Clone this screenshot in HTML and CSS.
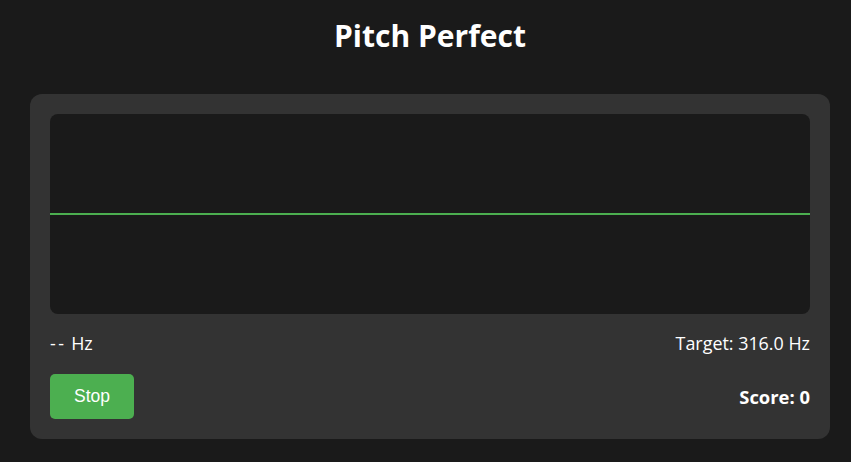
FILE: index.html
```html
<!DOCTYPE html>
<html>
<head>
<meta charset="utf-8">
<link rel="stylesheet" href="styles.css">
</head>
<body>
<h1 class="title">Pitch Perfect</h1>
<div class="panel">
  <div class="scope"><div class="line"></div></div>
  <div class="info">
    <span><span class="dash">--</span> Hz</span>
    <span>Target: 316.0 Hz</span>
  </div>
  <div class="controls">
    <button class="btn">Stop</button>
    <span class="score">Score: 0</span>
  </div>
</div>
</body>
</html>
```
FILE: styles.css
```css
html, body {
  margin: 0;
  padding: 0;
  background: #1a1a1a;
  color: #ffffff;
  font-family: "Open Sans", "Noto Sans", sans-serif;
}
body {
  padding: 14px 21px 0 30px;
  width: 800px;
}
.title {
  margin: 0 0 37px 0;
  text-align: center;
  font-size: 30px;
  line-height: 43px;
  font-weight: 700;
}
.panel {
  background: #333333;
  border-radius: 12px;
  padding: 20px;
  display: flex;
  flex-direction: column;
}
.scope {
  height: 200px;
  background: #1a1a1a;
  border-radius: 8px;
  display: flex;
  align-items: center;
}
.line {
  width: 100%;
  height: 2px;
  background: #4caf50;
}
.info {
  display: flex;
  justify-content: space-between;
  margin-top: 17px;
  font-size: 17.9px;
  line-height: 24px;
}
.dash {
  letter-spacing: 2.5px;
}
.controls {
  display: flex;
  justify-content: space-between;
  align-items: center;
  margin-top: 19px;
}
.btn {
  background: #4caf50;
  color: #fff;
  border: none;
  border-radius: 5px;
  font-family: "Liberation Sans", Arial, sans-serif;
  font-size: 17.5px;
  height: 45px;
  width: 84px;
  padding: 0;
}
.score {
  font-weight: 700;
  font-size: 18.4px;
}
```
